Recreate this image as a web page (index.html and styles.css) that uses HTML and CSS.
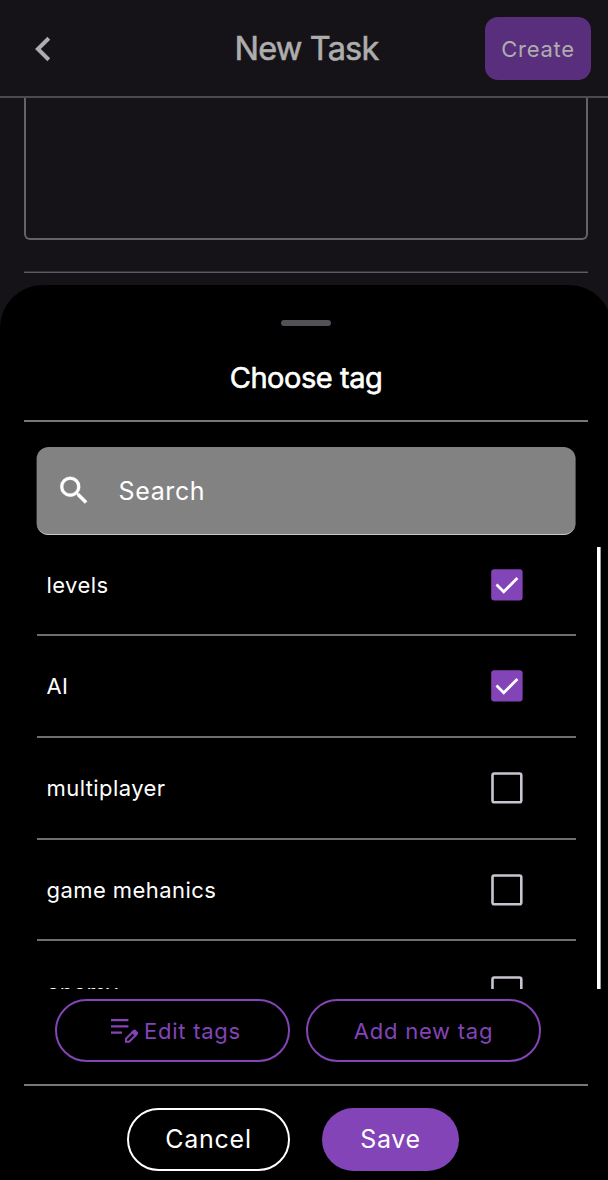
FILE: index.html
```html
<!DOCTYPE html>
<html lang="en">
<head>
<meta charset="utf-8">
<title>New Task</title>
<link rel="stylesheet" href="styles.css">
</head>
<body>
<div class="screen">
  <header class="header">
    <svg class="back" width="18" height="26" viewBox="0 0 18 26"><path d="M14.8 2.3 3.9 13 14.8 23.7" fill="none" stroke="#adadad" stroke-width="4"/></svg>
    <h1 class="page-title">New Task</h1>
    <button class="create">Create</button>
  </header>
  <main class="form">
    <div class="textarea"></div>
    <div class="form-line"></div>
  </main>
  <section class="sheet">
    <div class="handle"></div>
    <h2 class="sheet-title">Choose tag</h2>
    <div class="line"></div>
    <div class="search">
      <svg class="search-icon" width="37" height="37" viewBox="0 0 24 24"><path fill="#fff" stroke="#fff" stroke-width=".2" d="M15.5 14h-.79l-.28-.27A6.471 6.471 0 0 0 16 9.5 6.5 6.5 0 1 0 9.5 16c1.61 0 3.09-.59 4.23-1.57l.27.28v.79l5 4.99L20.49 19l-4.99-5zm-6 0C7.01 14 5 11.99 5 9.5S7.01 5 9.5 5 14 7.01 14 9.5 11.99 14 9.5 14z"/></svg>
      <span class="search-text">Search</span>
    </div>
    <div class="viewport">
      <ul class="tags">
        <li class="tag"><span class="tag-name">levels</span><svg class="box" width="32" height="32" viewBox="0 0 32 32"><rect x=".2" y=".2" width="31.4" height="31.4" rx="3" fill="#8344b8"/><path d="M5.5 15.6 12.7 22.7 26.4 9" fill="none" stroke="#fff" stroke-width="2.8"/></svg></li>
        <li class="tag"><span class="tag-name">AI</span><svg class="box" width="32" height="32" viewBox="0 0 32 32"><rect x=".2" y=".2" width="31.4" height="31.4" rx="3" fill="#8344b8"/><path d="M5.5 15.6 12.7 22.7 26.4 9" fill="none" stroke="#fff" stroke-width="2.8"/></svg></li>
        <li class="tag"><span class="tag-name">multiplayer</span><svg class="box" width="32" height="32" viewBox="0 0 32 32"><rect x="1.5" y="1.5" width="28.8" height="28.8" rx="1.8" fill="none" stroke="#cac4d0" stroke-width="2.6"/></svg></li>
        <li class="tag"><span class="tag-name">game mehanics</span><svg class="box" width="32" height="32" viewBox="0 0 32 32"><rect x="1.5" y="1.5" width="28.8" height="28.8" rx="1.8" fill="none" stroke="#cac4d0" stroke-width="2.6"/></svg></li>
        <li class="tag"><span class="tag-name">enemy</span><svg class="box" width="32" height="32" viewBox="0 0 32 32"><rect x="1.5" y="1.5" width="28.8" height="28.8" rx="1.8" fill="none" stroke="#cac4d0" stroke-width="2.6"/></svg></li>
      </ul>
      <div class="scrollbar"></div>
    </div>
    <div class="tag-actions">
      <button class="pill outline edit"><svg class="edit-icon" width="28" height="26" viewBox="0 0 28 26"><g fill="none" stroke="#8344b8"><path d="M0 2.2h17.4M0 8.4h17.4M0 14.6h11" stroke-width="2.2"/><path d="M15 23.8v-3.1l6.6-6.6 3.1 3.1-6.6 6.6z" stroke-width="2"/></g><path d="M20.2 14.1l2-2c.8-.8 1.7-.9 2.5-.1l1.9 1.9c.8.8.7 1.7-.1 2.5l-2 2z" fill="#8344b8"/></svg><span>Edit tags</span></button>
      <button class="pill outline add">Add new tag</button>
    </div>
    <div class="line"></div>
    <div class="sheet-actions">
      <button class="pill cancel">Cancel</button>
      <button class="pill save">Save</button>
    </div>
  </section>
</div>
</body>
</html>
```
FILE: styles.css
```css
* { box-sizing: border-box; }
html { overflow: hidden; background: #000; }
body { margin: 0; width: 608px; height: 1180px; overflow: hidden; font-family: Inter, sans-serif; }
.screen { width: 612px; height: 1180px; display: flex; flex-direction: column; background: #151317; }
h1, h2, ul { margin: 0; padding: 0; font-weight: 400; }
button { padding: 0; border: 0; background: none; font-family: inherit; font-weight: 400; white-space: nowrap; }

.header { flex: none; height: 98px; padding: 0 21px 0 34px; border-bottom: 2px solid #4b4a4b; display: grid; grid-template-columns: 106px 1fr 106px; align-items: center; }
.back { display: block; margin-top: 1px; }
.page-title { text-align: center; color: #adadad; font-size: 32.5px; line-height: 40px; letter-spacing: -0.8px; padding: 2px 12px 0 0; -webkit-text-stroke: 0.6px #adadad; }
.create { width: 106px; height: 63px; margin-top: 1px; border-radius: 13px; background: #592e7d; color: #adadad; font-size: 22px; letter-spacing: 0.7px; }

.form { flex: none; height: 187px; padding: 0 24px; }
.textarea { height: 142px; border: 2px solid #656267; border-top: 0; border-radius: 0 0 6px 6px; }
.form-line { margin-top: 31px; height: 2px; background: linear-gradient(#343236 50%, #5d5b60 50%); }

.sheet { flex: 1; min-height: 0; background: #000; border-radius: 43px 43px 0 0; display: flex; flex-direction: column; }
.handle { flex: none; align-self: center; width: 50px; height: 6px; margin-top: 35px; border-radius: 3px; background: #535158; }
.sheet-title { flex: none; margin-top: 32px; height: 40px; line-height: 40px; text-align: center; color: #fff; font-size: 29px; letter-spacing: -0.45px; -webkit-text-stroke: 0.6px #fff; }
.line { flex: none; height: 2px; margin: 22px 24px 0; background: #777; }
.search { flex: none; height: 88px; margin: 25px 36.5px 0; padding-left: 19px; display: flex; align-items: center; border-radius: 12px; background: #828282; border-bottom: 1.5px solid #cac4d0; transform: translateX(-0.4px); }
.search-icon { flex: none; }
.search-text { margin-left: 26.5px; color: #fff; font-size: 25px; letter-spacing: 0.6px; }

.viewport { flex: none; height: 442px; margin-top: 12px; padding: 0 11px 0 36.5px; display: flex; justify-content: space-between; overflow: hidden; }
.tags { width: 539px; margin-top: -12.7px; list-style: none; }
.tag { height: 101.75px; padding: 0 53px 0.9px 10px; display: flex; align-items: center; justify-content: space-between; background: linear-gradient(#6e6e6e, #6e6e6e) bottom / 100% 2px no-repeat; }
.tag-name { color: #fff; font-size: 22px; letter-spacing: 0.43px; }
.scrollbar { width: 4px; height: 442px; background: #fff; border: solid #999; border-width: 0 1px 0 0; }

.pill { height: 63px; border-radius: 32px; display: flex; align-items: center; justify-content: center; }
.tag-actions { flex: none; margin-top: 10px; padding-left: 55px; display: flex; gap: 16px; }
.outline { width: 235px; border: 2px solid #8344b8; color: #8344b8; font-size: 22px; letter-spacing: 0.75px; }
.edit { padding-left: 7px; }
.edit-icon { margin-right: 5px; }
.sheet-actions { flex: none; margin-top: 22px; padding-left: 127px; display: flex; gap: 32px; }
.cancel { width: 163px; padding-bottom: 1px; border: 2px solid #fff; color: #fff; font-size: 25px; letter-spacing: 0.75px; }
.save { width: 137px; padding-bottom: 1px; background: #8344b8; color: #fff; font-size: 25px; letter-spacing: 0.7px; }
```
